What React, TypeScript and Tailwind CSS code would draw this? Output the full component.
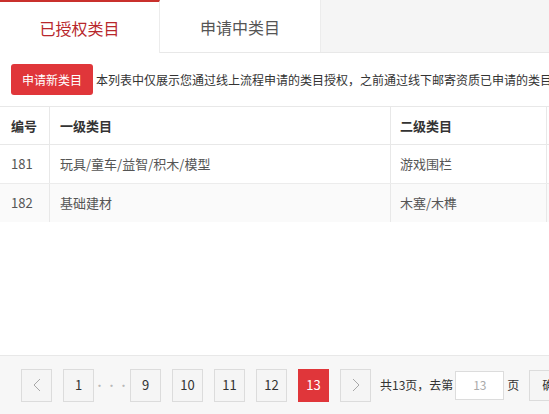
import React from "react";

const font = { fontFamily: '"Microsoft YaHei","Noto Sans CJK SC","Liberation Sans",sans-serif' };

function PageBtn({ children, active, muted }: { children: React.ReactNode; active?: boolean; muted?: boolean }) {
  return (
    <div
      className={
        "w-[31px] h-[33px] flex items-center justify-center text-[13px] border " +
        (active
          ? "bg-[#e0363a] border-[#e0363a] text-white"
          : "bg-[#f5f5f5] border-[#dcdcdc] " + (muted ? "text-[#b0b0b0]" : "text-[#333]"))
      }
    >
      {children}
    </div>
  );
}

const Chevron = ({ dir }: { dir: "l" | "r" }) => (
  <svg width="8" height="14" viewBox="0 0 8 14" fill="none" stroke="#a8a8a8" strokeWidth="1">
    {dir === "l" ? <path d="M7 1 L1 7 L7 13" /> : <path d="M1 1 L7 7 L1 13" />}
  </svg>
);

export default function App() {
  return (
    <div className="w-[549px] h-[414px] overflow-hidden bg-white flex flex-col" style={font}>
      <div className="w-[820px] flex flex-col h-full">
        {/* Tabs */}
        <div className="flex h-[53px] bg-[#f5f5f5] border-b border-[#e8e8e8] shrink-0">
          <div className="w-[160px] bg-white border-t-2 border-[#c9302c] border-r border-r-[#ececec] flex items-center justify-center text-[16px] text-[#b8272c] -mb-px">
            已授权类目
          </div>
          <div className="w-[161px] bg-white border-r border-[#ececec] flex items-center justify-center text-[16px] text-[#555] pt-[2px]">
            申请中类目
          </div>
          <div className="flex-1" />
        </div>
        {/* Toolbar */}
        <div className="flex items-center h-[53px] pl-[11px] shrink-0">
          <div className="w-[82px] h-[31px] bg-[#e0363a] rounded-[3px] text-white text-[12px] flex items-center justify-center">
            申请新类目
          </div>
          <div className="ml-[3px] text-[12px] text-[#333] whitespace-nowrap">
            本列表中仅展示您通过线上流程申请的类目授权，之前通过线下邮寄资质已申请的类目不在此列表中展示
          </div>
        </div>
        {/* Table */}
        <div className="border-t border-[#e8e8e8] text-[13px] shrink-0">
          <div className="flex h-[38px] border-b border-[#e8e8e8] font-semibold text-[#333]">
            <div className="w-[50px] border-r border-[#e8e8e8] pl-[11px] flex items-center">编号</div>
            <div className="w-[341px] border-r border-[#e8e8e8] pl-[10px] flex items-center">一级类目</div>
            <div className="w-[156px] border-r border-[#e8e8e8] pl-[9px] flex items-center">二级类目</div>
            <div className="flex-1" />
          </div>
          <div className="flex h-[39px] border-b border-[#ececec] text-[#555]">
            <div className="w-[50px] border-r border-[#e8e8e8] pl-[11px] flex items-center">181</div>
            <div className="w-[341px] border-r border-[#e8e8e8] pl-[10px] flex items-center">玩具/童车/益智/积木/模型</div>
            <div className="w-[156px] border-r border-[#e8e8e8] pl-[9px] flex items-center">游戏围栏</div>
            <div className="flex-1" />
          </div>
          <div className="flex h-[38px] bg-[#fafafa] text-[#555]">
            <div className="w-[50px] border-r border-[#e8e8e8] pl-[11px] flex items-center">182</div>
            <div className="w-[341px] border-r border-[#e8e8e8] pl-[10px] flex items-center">基础建材</div>
            <div className="w-[156px] border-r border-[#e8e8e8] pl-[9px] flex items-center">木塞/木榫</div>
            <div className="flex-1" />
          </div>
        </div>
        <div className="flex-1" />
        {/* Pagination */}
        <div className="h-[59px] bg-[#f7f7f7] border-t border-[#e8e8e8] flex items-center pl-[21px] gap-[11px] shrink-0 text-[13px] text-[#333]">
          <PageBtn><Chevron dir="l" /></PageBtn>
          <PageBtn>1</PageBtn>
          <div className="w-[14px] text-[#b8b8b8] text-[11px] flex justify-center tracking-[1px]">···</div>
          <PageBtn>9</PageBtn>
          <PageBtn>10</PageBtn>
          <PageBtn>11</PageBtn>
          <PageBtn>12</PageBtn>
          <PageBtn active>13</PageBtn>
          <div className="flex items-center">
            <PageBtn><Chevron dir="r" /></PageBtn>
            <span className="ml-[9px] whitespace-nowrap text-[12px]">共13页，去第</span>
            <div className="ml-[2px] w-[49px] h-[29px] bg-white border border-[#dcdcdc] flex items-center justify-center text-[#aaa] text-[12px]">
              13
            </div>
            <span className="ml-[3px] text-[12px]">页</span>
            <div className="ml-[10px] h-[31px] px-[12px] bg-[#f5f5f5] border border-[#dcdcdc] flex items-center text-[12px] whitespace-nowrap">确定</div>
          </div>
        </div>
      </div>
    </div>
  );
}
